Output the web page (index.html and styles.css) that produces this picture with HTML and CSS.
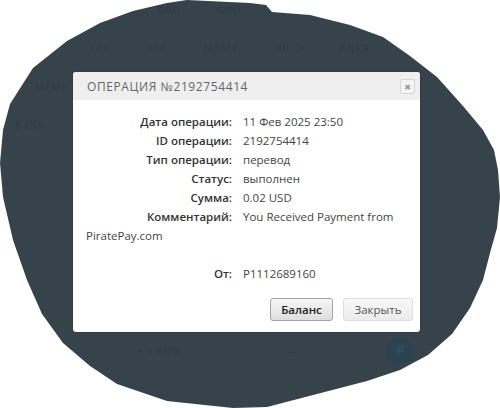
FILE: index.html
```html
<!DOCTYPE html>
<html lang="ru">
<head>
<meta charset="utf-8">
<title>Операция</title>
<link rel="stylesheet" href="styles.css">
</head>
<body>
<div class="backdrop">
  <div class="bg-row bg-row1"><span>DAO</span><span>GNO</span></div>
  <div class="bg-row bg-row2"><span>LRC</span><span>SFP</span><span>JASMY</span><span>BICO</span><span>ANKR</span></div>
  <div class="bg-row bg-row3"><span>MEME</span></div>
  <div class="bg-row bg-row4"><span>8 CSV</span></div>
  <div class="bg-row bg-row5"><span class="rub">+ 1 RUB</span><span class="dash">—</span><span class="avatar">P</span></div>
</div>

<div class="modal">
  <div class="modal-head">
    <span class="modal-title">Операция №2192754414</span>
    <span class="close-x">✖</span>
  </div>
  <div class="modal-body">
    <div class="row"><span class="lbl">Дата операции:</span><span class="val">11 Фев 2025 23:50</span></div>
    <div class="row"><span class="lbl">ID операции:</span><span class="val">2192754414</span></div>
    <div class="row"><span class="lbl">Тип операции:</span><span class="val">перевод</span></div>
    <div class="row"><span class="lbl">Статус:</span><span class="val">выполнен</span></div>
    <div class="row"><span class="lbl">Сумма:</span><span class="val">0.02 USD</span></div>
    <div class="row"><span class="lbl">Комментарий:</span><span class="val">You Received Payment from</span></div>
    <div class="row-cont">PiratePay.com</div>
    <div class="row row-gap"><span class="lbl">От:</span><span class="val">P1112689160</span></div>
  </div>
  <div class="modal-foot">
    <button class="btn btn-main">Баланс</button>
    <button class="btn btn-light">Закрыть</button>
  </div>
</div>
</body>
</html>
```

FILE: styles.css
```css
html, body {
  margin: 0;
  padding: 0;
  background: #ffffff;
  width: 500px;
  height: 408px;
  overflow: hidden;
  font-family: "Open Sans", "Noto Sans", "DejaVu Sans", sans-serif;
}

.backdrop {
  position: absolute;
  left: 0;
  top: 0;
  width: 500px;
  height: 408px;
  background: #37434b;
  clip-path: path('M 187 0 L 250 3 L 266 5 L 272 12 L 310 15 L 350 25 L 383 37 L 410 56 L 437 77 L 463 106 L 483 130 L 494 150 L 498 170 L 500 197 L 497 228 L 490 253 L 483 280 L 470 308 L 452 334 L 428 355 L 400 370 L 367 381 L 317 394 L 267 407 L 233 408 L 167 401 L 117 384 L 90 366 L 63 343 L 42 314 L 27 280 L 13 240 L 3 197 L 0 163 L 3 130 L 10 104 L 33 68 L 67 41 L 100 23 L 133 11 L 167 3 Z');
  color: #313c43;
  font-size: 10px;
  font-weight: 600;
  letter-spacing: 0.8px;
}

.bg-row {
  display: flex;
  height: 16px;
  line-height: 16px;
}
.bg-row1 { padding: 2px 0 0 157px; gap: 35px; }
.bg-row2 { padding: 22px 0 0 90px; gap: 37px; }
.bg-row3 { padding: 23px 0 0 35px; }
.bg-row4 { padding: 22px 0 0 15px; }
.bg-row5 { padding: 210px 0 0 137px; align-items: center; }
.bg-row5 .dash { margin-left: 108px; }
.bg-row5 .avatar {
  margin-left: 88px;
  width: 27px;
  height: 27px;
  border-radius: 50%;
  background: #2b4350;
  color: #35505e;
  font-size: 14px;
  display: flex;
  align-items: center;
  justify-content: center;
  letter-spacing: 0;
}

.modal {
  position: absolute;
  left: 73px;
  top: 72px;
  width: 347px;
  height: 260px;
  background: #ffffff;
  border-radius: 3px;
  box-shadow: 0 0 2px rgba(0, 0, 0, 0.35);
  display: flex;
  flex-direction: column;
  overflow: hidden;
}

.modal-head {
  height: 28px;
  background: #efefef;
  display: flex;
  align-items: center;
  justify-content: space-between;
  padding: 0 5px 0 14px;
}

.modal-title {
  text-transform: uppercase;
  color: #666666;
  font-size: 12px;
  letter-spacing: 0.6px;
}

.close-x {
  width: 13px;
  height: 13px;
  border: 1px solid #d6d6d6;
  border-radius: 2px;
  background: #f4f4f4;
  color: #9a9a9a;
  font-size: 8px;
  line-height: 13px;
  text-align: center;
}

.modal-body {
  padding: 12px 13px 0 13px;
  font-size: 11.5px;
  line-height: 19px;
  color: #444444;
}

.row .lbl {
  display: inline-block;
  width: 146px;
  margin-right: 11px;
  text-align: right;
  font-weight: 600;
  color: #333333;
}

.row-gap { margin-top: 19px; }

.modal-foot {
  display: flex;
  justify-content: flex-end;
  gap: 10px;
  padding: 15px 7px 0 0;
}

.btn {
  height: 23px;
  border-radius: 3px;
  font-family: "Open Sans", "Noto Sans", "DejaVu Sans", sans-serif;
  font-size: 11.5px;
  padding: 0;
}
.btn-main {
  width: 63px;
  border: 1px solid #a3a3a3;
  background: linear-gradient(#f6f6f6, #dedede);
  color: #222222;
  font-weight: 600;
}
.btn-light {
  width: 70px;
  border: 1px solid #dedede;
  background: linear-gradient(#f8f8f8, #ececec);
  color: #555555;
}
```
